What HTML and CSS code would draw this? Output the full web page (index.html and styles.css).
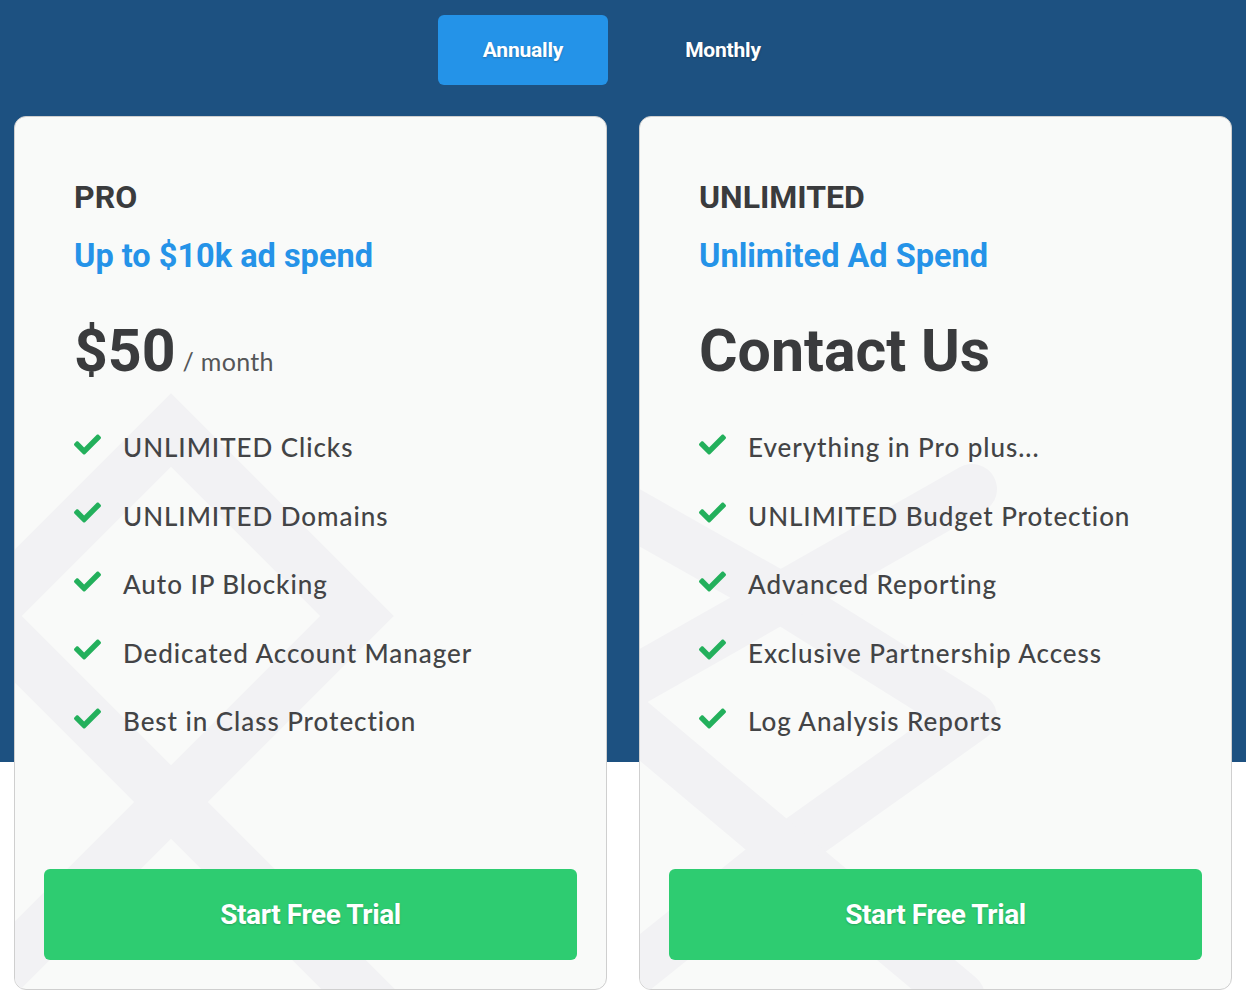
FILE: index.html
```html
<!DOCTYPE html>
<html lang="en">
<head>
<meta charset="utf-8">
<title>Pricing</title>
<link rel="stylesheet" href="styles.css">
</head>
<body>
<div class="page">
  <div class="toggle">
    <button class="tab tab-active">Annually</button>
    <button class="tab">Monthly</button>
  </div>
  <div class="plans">
    <div class="card">
      <svg class="pattern" viewBox="0 0 591 872" preserveAspectRatio="xMinYMin slice" aria-hidden="true">
        <path d="M-144 985 L342 499 L156 313 L-30 499 L156 685 L456 985" fill="none" stroke="#f2f2f4" stroke-width="52" stroke-linejoin="miter"/>
      </svg>
      <div class="card-body">
        <h2 class="plan-name">PRO</h2>
        <p class="plan-spend">Up to $10k ad spend</p>
        <div class="price"><span class="amount">$50</span><span class="period">/ month</span></div>
        <ul class="features">
          <li><svg class="check" viewBox="0 0 512 512"><path d="M173.9 439.4l-166.4-166.4c-10-10-10-26.2 0-36.2l36.2-36.2c10-10 26.2-10 36.2 0L192 312.7 432.1 72.6c10-10 26.2-10 36.2 0l36.2 36.2c10 10 10 26.2 0 36.2l-294.4 294.4c-10 10-26.2 10-36.2 0z"/></svg><span>UNLIMITED Clicks</span></li>
          <li><svg class="check" viewBox="0 0 512 512"><path d="M173.9 439.4l-166.4-166.4c-10-10-10-26.2 0-36.2l36.2-36.2c10-10 26.2-10 36.2 0L192 312.7 432.1 72.6c10-10 26.2-10 36.2 0l36.2 36.2c10 10 10 26.2 0 36.2l-294.4 294.4c-10 10-26.2 10-36.2 0z"/></svg><span>UNLIMITED Domains</span></li>
          <li><svg class="check" viewBox="0 0 512 512"><path d="M173.9 439.4l-166.4-166.4c-10-10-10-26.2 0-36.2l36.2-36.2c10-10 26.2-10 36.2 0L192 312.7 432.1 72.6c10-10 26.2-10 36.2 0l36.2 36.2c10 10 10 26.2 0 36.2l-294.4 294.4c-10 10-26.2 10-36.2 0z"/></svg><span>Auto IP Blocking</span></li>
          <li><svg class="check" viewBox="0 0 512 512"><path d="M173.9 439.4l-166.4-166.4c-10-10-10-26.2 0-36.2l36.2-36.2c10-10 26.2-10 36.2 0L192 312.7 432.1 72.6c10-10 26.2-10 36.2 0l36.2 36.2c10 10 10 26.2 0 36.2l-294.4 294.4c-10 10-26.2 10-36.2 0z"/></svg><span>Dedicated Account Manager</span></li>
          <li><svg class="check" viewBox="0 0 512 512"><path d="M173.9 439.4l-166.4-166.4c-10-10-10-26.2 0-36.2l36.2-36.2c10-10 26.2-10 36.2 0L192 312.7 432.1 72.6c10-10 26.2-10 36.2 0l36.2 36.2c10 10 10 26.2 0 36.2l-294.4 294.4c-10 10-26.2 10-36.2 0z"/></svg><span>Best in Class Protection</span></li>
        </ul>
      </div>
      <a class="cta" href="#">Start Free Trial</a>
    </div>

    <div class="card">
      <svg class="pattern" viewBox="0 0 591 872" preserveAspectRatio="xMinYMin slice" aria-hidden="true">
        <path d="M-140 322 L145 483 L332 600 L145 733 L-100 929" fill="none" stroke="#f2f2f4" stroke-width="50" stroke-linejoin="round"/>
        <path d="M332 372 L-36 581 L145 733 L320 880" fill="none" stroke="#f2f2f4" stroke-width="50" stroke-linejoin="round" stroke-linecap="round"/>
      </svg>
      <div class="card-body">
        <h2 class="plan-name">UNLIMITED</h2>
        <p class="plan-spend">Unlimited Ad Spend</p>
        <div class="price"><span class="amount">Contact Us</span></div>
        <ul class="features">
          <li><svg class="check" viewBox="0 0 512 512"><path d="M173.9 439.4l-166.4-166.4c-10-10-10-26.2 0-36.2l36.2-36.2c10-10 26.2-10 36.2 0L192 312.7 432.1 72.6c10-10 26.2-10 36.2 0l36.2 36.2c10 10 10 26.2 0 36.2l-294.4 294.4c-10 10-26.2 10-36.2 0z"/></svg><span>Everything in Pro plus...</span></li>
          <li><svg class="check" viewBox="0 0 512 512"><path d="M173.9 439.4l-166.4-166.4c-10-10-10-26.2 0-36.2l36.2-36.2c10-10 26.2-10 36.2 0L192 312.7 432.1 72.6c10-10 26.2-10 36.2 0l36.2 36.2c10 10 10 26.2 0 36.2l-294.4 294.4c-10 10-26.2 10-36.2 0z"/></svg><span>UNLIMITED Budget Protection</span></li>
          <li><svg class="check" viewBox="0 0 512 512"><path d="M173.9 439.4l-166.4-166.4c-10-10-10-26.2 0-36.2l36.2-36.2c10-10 26.2-10 36.2 0L192 312.7 432.1 72.6c10-10 26.2-10 36.2 0l36.2 36.2c10 10 10 26.2 0 36.2l-294.4 294.4c-10 10-26.2 10-36.2 0z"/></svg><span>Advanced Reporting</span></li>
          <li><svg class="check" viewBox="0 0 512 512"><path d="M173.9 439.4l-166.4-166.4c-10-10-10-26.2 0-36.2l36.2-36.2c10-10 26.2-10 36.2 0L192 312.7 432.1 72.6c10-10 26.2-10 36.2 0l36.2 36.2c10 10 10 26.2 0 36.2l-294.4 294.4c-10 10-26.2 10-36.2 0z"/></svg><span>Exclusive Partnership Access</span></li>
          <li><svg class="check" viewBox="0 0 512 512"><path d="M173.9 439.4l-166.4-166.4c-10-10-10-26.2 0-36.2l36.2-36.2c10-10 26.2-10 36.2 0L192 312.7 432.1 72.6c10-10 26.2-10 36.2 0l36.2 36.2c10 10 10 26.2 0 36.2l-294.4 294.4c-10 10-26.2 10-36.2 0z"/></svg><span>Log Analysis Reports</span></li>
        </ul>
      </div>
      <a class="cta" href="#">Start Free Trial</a>
    </div>
  </div>
</div>
</body>
</html>
```

FILE: styles.css
```css
html, body {
  margin: 0;
  padding: 0;
  overflow: hidden;
}

body {
  font-family: Roboto, "Liberation Sans", sans-serif;
  background: linear-gradient(to bottom, #1d5181 0, #1d5181 762px, #ffffff 762px, #ffffff 100%);
  min-height: 990px;
}

.page {
  width: 1246px;
}

.toggle {
  display: flex;
  justify-content: center;
  gap: 30px;
  padding-top: 15px;
}

.tab {
  width: 170px;
  height: 70px;
  border: none;
  border-radius: 6px;
  background: transparent;
  color: #ffffff;
  font-family: Roboto, "Liberation Sans", sans-serif;
  font-weight: 700;
  font-size: 21px;
  letter-spacing: -0.2px;
  text-shadow: 0 1px 2px rgba(0, 0, 0, 0.25);
  cursor: pointer;
  padding: 0;
}

.tab-active {
  background: #2493e8;
}

.plans {
  display: grid;
  grid-template-columns: 1fr 1fr;
  gap: 32px;
  padding: 31px 14px 0;
}

.card {
  position: relative;
  box-sizing: border-box;
  height: 874px;
  border: 1px solid #cfcfcf;
  border-radius: 12px;
  background: #f9faf9;
  overflow: hidden;
  display: flex;
  flex-direction: column;
  padding: 61px 29px 29px;
}

.pattern {
  position: absolute;
  top: 0;
  left: 0;
  width: 100%;
  height: 100%;
}

.card-body {
  position: relative;
  margin-left: 30px;
}

.plan-name {
  margin: 0;
  font-size: 32px;
  line-height: 38px;
  font-weight: 700;
  color: #3a3b3d;
}

.plan-spend {
  margin: 21px 0 0;
  font-size: 32.5px;
  line-height: 38px;
  font-weight: 700;
  color: #2593e8;
}

.price {
  display: flex;
  align-items: baseline;
  margin-top: 41px;
  height: 70px;
}

.amount {
  font-size: 59px;
  line-height: 70px;
  font-weight: 700;
  color: #3a3b3d;
}

.period {
  margin-left: 7px;
  font-family: Lato, "Open Sans", sans-serif;
  font-size: 25px;
  letter-spacing: 0.3px;
  color: #555658;
}

.features {
  list-style: none;
  margin: 43px 0 0;
  padding: 0;
  display: flex;
  flex-direction: column;
  gap: 32.5px;
}

.features li {
  display: flex;
  align-items: center;
  height: 36px;
  font-family: Lato, "Open Sans", sans-serif;
  font-weight: 500;
  font-size: 26px;
  line-height: 36px;
  color: #434446;
  letter-spacing: 0.95px;
}

.check {
  width: 27px;
  height: 27px;
  flex: none;
  margin-right: 22px;
  margin-top: -6px;
  fill: #23b05c;
}

.cta {
  position: relative;
  margin-top: auto;
  height: 91px;
  display: flex;
  align-items: center;
  justify-content: center;
  background: #2ecc71;
  border-radius: 6px;
  color: #ffffff;
  text-decoration: none;
  font-family: Roboto, "Liberation Sans", sans-serif;
  font-weight: 700;
  font-size: 28px;
  letter-spacing: -0.4px;
  text-shadow: 0 1px 2px rgba(0, 0, 0, 0.2);
}
```
